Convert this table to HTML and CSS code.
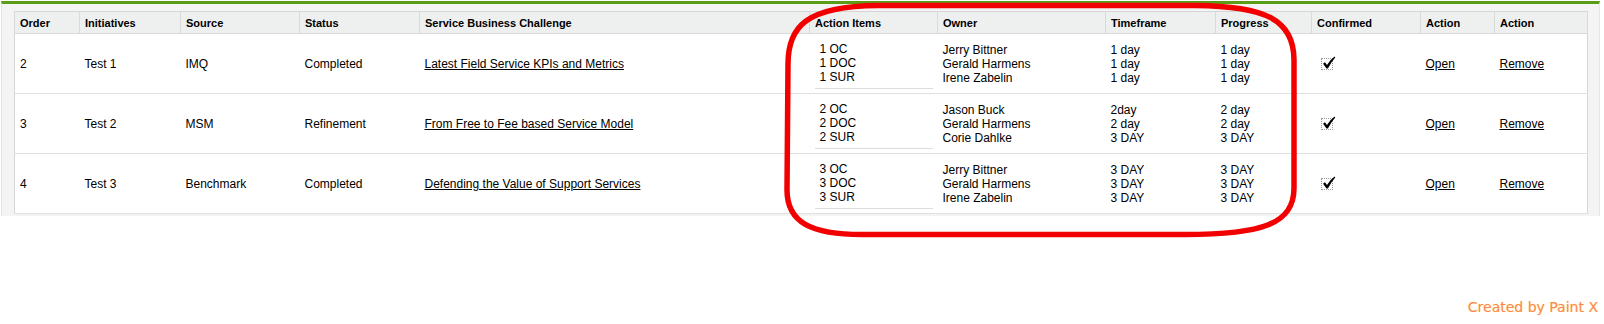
FILE: index.html
```html
<!DOCTYPE html>
<html>
<head>
<meta charset="utf-8">
<link rel="stylesheet" href="styles.css">
</head>
<body>
<div class="panel">
  <table class="grid">
    <colgroup>
      <col style="width:65px"><col style="width:101px"><col style="width:119px"><col style="width:120px">
      <col style="width:390px"><col style="width:128px"><col style="width:168px"><col style="width:110px">
      <col style="width:96px"><col style="width:109px"><col style="width:74px"><col style="width:93px">
    </colgroup>
    <thead>
      <tr>
        <th>Order</th><th>Initiatives</th><th>Source</th><th>Status</th><th>Service Business Challenge</th>
        <th>Action Items</th><th>Owner</th><th>Timeframe</th><th>Progress</th><th>Confirmed</th><th>Action</th><th>Action</th>
      </tr>
    </thead>
    <tbody>
      <tr>
        <td>2</td><td>Test 1</td><td>IMQ</td><td>Completed</td>
        <td><a href="#">Latest Field Service KPIs and Metrics</a></td>
        <td><div class="items">1 OC<br>1 DOC<br>1 SUR</div></td>
        <td>Jerry Bittner<br>Gerald Harmens<br>Irene Zabelin</td>
        <td>1 day<br>1 day<br>1 day</td>
        <td>1 day<br>1 day<br>1 day</td>
        <td><span class="check"><svg width="14" height="14" viewBox="0 0 14 14"><path d="M1.1 7.7 L2.9 6.3 L5.0 8.9 Q8.2 3.7 12.6 0.6 L13.3 1.4 Q9.3 5.6 5.9 12.6 L4.5 12.6 Z" fill="#000"/></svg></span></td>
        <td><a href="#">Open</a></td><td><a href="#">Remove</a></td>
      </tr>
      <tr>
        <td>3</td><td>Test 2</td><td>MSM</td><td>Refinement</td>
        <td><a href="#">From Free to Fee based Service Model</a></td>
        <td><div class="items">2 OC<br>2 DOC<br>2 SUR</div></td>
        <td>Jason Buck<br>Gerald Harmens<br>Corie Dahlke</td>
        <td>2day<br>2 day<br>3 DAY</td>
        <td>2 day<br>2 day<br>3 DAY</td>
        <td><span class="check"><svg width="14" height="14" viewBox="0 0 14 14"><path d="M1.1 7.7 L2.9 6.3 L5.0 8.9 Q8.2 3.7 12.6 0.6 L13.3 1.4 Q9.3 5.6 5.9 12.6 L4.5 12.6 Z" fill="#000"/></svg></span></td>
        <td><a href="#">Open</a></td><td><a href="#">Remove</a></td>
      </tr>
      <tr>
        <td>4</td><td>Test 3</td><td>Benchmark</td><td>Completed</td>
        <td><a href="#">Defending the Value of Support Services</a></td>
        <td><div class="items">3 OC<br>3 DOC<br>3 SUR</div></td>
        <td>Jerry Bittner<br>Gerald Harmens<br>Irene Zabelin</td>
        <td>3 DAY<br>3 DAY<br>3 DAY</td>
        <td>3 DAY<br>3 DAY<br>3 DAY</td>
        <td><span class="check"><svg width="14" height="14" viewBox="0 0 14 14"><path d="M1.1 7.7 L2.9 6.3 L5.0 8.9 Q8.2 3.7 12.6 0.6 L13.3 1.4 Q9.3 5.6 5.9 12.6 L4.5 12.6 Z" fill="#000"/></svg></span></td>
        <td><a href="#">Open</a></td><td><a href="#">Remove</a></td>
      </tr>
    </tbody>
  </table>
</div>
<svg class="annotation" width="1604" height="324" viewBox="0 0 1604 324">
  <path d="M 878 5.5 L 1195 5.5 C 1266 6, 1294 20, 1294 60 L 1294 188 C 1294 224, 1262 234.5, 1185 234.5 L 862 234.5 C 812 234.5, 787 223, 787 190 L 788 64 C 788 27, 806 6, 878 5.5 Z" fill="none" stroke="#f20000" stroke-width="5.5" stroke-linejoin="round"/>
</svg>
<div class="watermark">Created by Paint X</div>
</body>
</html>
```
FILE: styles.css
```css
html, body {
  margin: 0;
  padding: 0;
  background: #ffffff;
}
body {
  position: relative;
  width: 1604px;
  height: 324px;
  overflow: hidden;
  font-family: "Liberation Sans", Arial, Helvetica, sans-serif;
  font-size: 12px;
  color: #000;
}
.panel {
  margin: 1px 5px 0 1px;
  background: #f4f4f4;
  border-top: 3px solid #5a9e16;
  border-left: 1px solid #e2e2e2;
  border-right: 1px solid #e6e6e6;
  padding: 7px 10px 2px 12px;
  width: 1575px;
}
.grid {
  border-collapse: collapse;
  table-layout: fixed;
  width: 1573px;
  background: #ffffff;
  border: 1px solid #d6d6d6;
}
.grid th {
  height: 21px;
  padding: 0 5px;
  text-align: left;
  font-size: 11px;
  font-weight: bold;
  background: #eef0f0;
  border: 1px solid #d9dbdb;
  border-top-color: #d6d6d6;
  vertical-align: middle;
  white-space: nowrap;
}
.grid td {
  height: 59px;
  padding: 0 5px;
  border-bottom: 1px solid #e0e0e0;
  vertical-align: middle;
  line-height: 14px;
  white-space: nowrap;
}
.grid a {
  color: #000;
  text-decoration: underline;
}
.items {
  padding: 4px 5px;
  border-bottom: 1px solid #dcdcdc;
}
.check {
  display: inline-block;
  position: relative;
  width: 10px;
  height: 10px;
  margin-left: 4px;
  border: 1px dotted #9a9a9a;
  vertical-align: middle;
}
.check svg {
  position: absolute;
  left: 0;
  top: -3px;
}
.annotation {
  position: absolute;
  left: 0;
  top: 0;
  pointer-events: none;
}
.watermark {
  position: absolute;
  right: 6px;
  top: 299px;
  font-family: "DejaVu Sans", Verdana, sans-serif;
  font-size: 14px;
  color: #ff8755;
  text-shadow: 0 0 1px #ffe070;
}
```
